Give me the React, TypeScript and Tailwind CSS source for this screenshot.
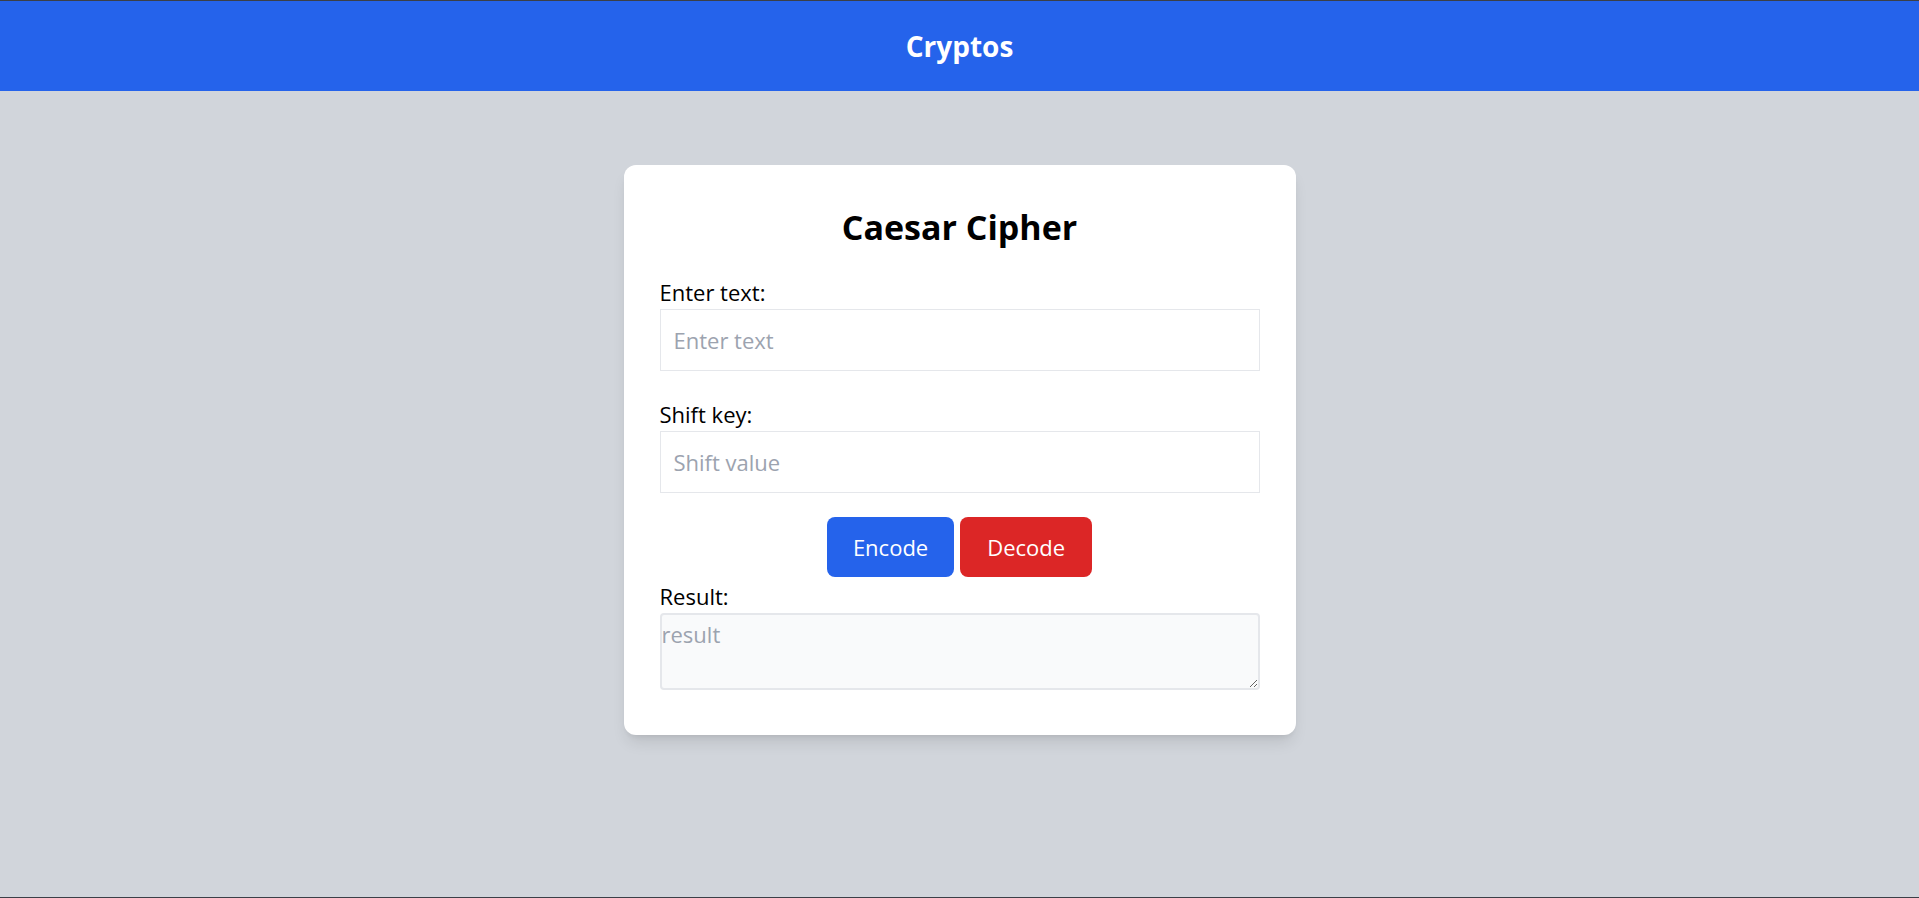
import React, { useState } from 'react';

const shiftText = (text: string, shift: number) =>
  text.replace(/[a-z]/gi, (ch) => {
    const base = ch <= 'Z' ? 65 : 97;
    return String.fromCharCode(((((ch.charCodeAt(0) - base + shift) % 26) + 26) % 26) + base);
  });

const App = () => {
  const [text, setText] = useState('');
  const [shift, setShift] = useState('');
  const [result, setResult] = useState('');

  const handleEncode = () => setResult(shiftText(text, Number(shift) || 0));
  const handleDecode = () => setResult(shiftText(text, -(Number(shift) || 0)));

  return (
    <div className="h-screen flex flex-col bg-[#d1d5db] border-y border-[#3b3f47] font-['Open_Sans',sans-serif] text-black">
      <header className="h-[90px] shrink-0 bg-[#2563eb] flex items-center justify-center">
        <h1 className="text-[28px] font-bold text-white">Cryptos</h1>
      </header>

      <main className="flex justify-center pt-[74px]">
        <div className="w-[672px] bg-white rounded-xl shadow-lg px-9 pt-[41px] pb-[45px]">
          <h2 className="text-[34px] leading-[42px] font-bold text-center mb-[28px]">Caesar Cipher</h2>

          <label className="block text-[22px] leading-[33px]">Enter text:</label>
          <input
            type="text"
            value={text}
            onChange={(e) => setText(e.target.value)}
            placeholder="Enter text"
            className="block w-full h-[62px] border border-[#e5e7eb] px-[13px] text-[22px] placeholder:text-[#9ca3af] outline-none"
          />

          <label className="block text-[22px] leading-[33px] mt-[27px]">Shift key:</label>
          <input
            type="number"
            value={shift}
            onChange={(e) => setShift(e.target.value)}
            placeholder="Shift value"
            className="block w-full h-[62px] border border-[#e5e7eb] px-[13px] text-[22px] placeholder:text-[#9ca3af] outline-none"
          />

          <div className="flex justify-center gap-[6px] mt-[24px]">
            <button
              onClick={handleEncode}
              className="h-[60px] px-[26px] rounded-lg bg-[#2563eb] text-white text-[22px]"
            >
              Encode
            </button>
            <button
              onClick={handleDecode}
              className="h-[60px] px-[27px] rounded-lg bg-[#dc2626] text-white text-[22px]"
            >
              Decode
            </button>
          </div>

          <label className="block text-[22px] leading-[33px] mt-[3px]">Result:</label>
          <textarea
            readOnly
            value={result}
            placeholder="result"
            className="block w-full h-[77px] border-2 border-[#e5e7eb] rounded-sm bg-[#f9fafb] pt-[3px] text-[22px] leading-[33px] placeholder:text-[#9ca3af] outline-none"
          />
        </div>
      </main>
    </div>
  );
};

export default App;
